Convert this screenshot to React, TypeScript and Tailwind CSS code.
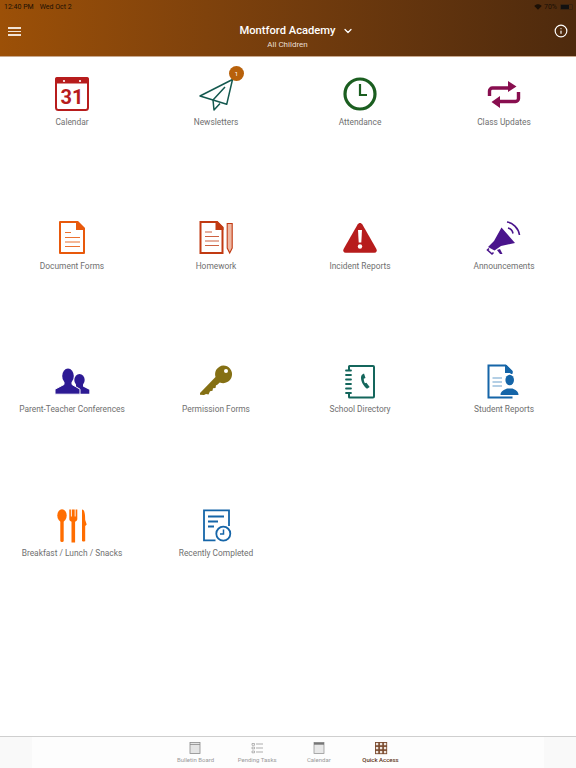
import type { ReactNode } from "react";
import { ChevronDown, Info } from "lucide-react";

const RED = "#b71c1c";

function Icon({ children }: { children: ReactNode }) {
  return (
    <svg viewBox="0 0 40 40" className="h-10 w-10">
      {children}
    </svg>
  );
}

function CalendarIcon() {
  return (
    <Icon>
      <rect x="4" y="4" width="32" height="32" rx="2.500" fill="none" stroke={RED} strokeWidth="2" />
      <path d="M5 3h30a2 2 0 0 1 2 2v4.500H3V5a2 2 0 0 1 2-2z" fill={RED} />
      <circle cx="12" cy="7" r="1.100" fill="#fff" />
      <circle cx="28" cy="7" r="1.100" fill="#fff" />
      <text x="20" y="30" textAnchor="middle" fontFamily="Roboto" fontWeight="700" fontSize="20" fill={RED}>
        31
      </text>
    </Icon>
  );
}

function PlaneIcon() {
  return (
    <Icon>
      <g fill="none" stroke="#14594f" strokeWidth="1.500" strokeLinejoin="round">
        <path d="M36.500 5.500 4 22l13 4 13.700 4.300z" />
        <path d="M29 13 17 26l1 10 6-6.500" />
      </g>
    </Icon>
  );
}

function ClockIcon() {
  return (
    <Icon>
      <circle cx="20" cy="20" r="15" fill="none" stroke="#1b5e20" strokeWidth="3.200" />
      <path d="M20 10v11h7" fill="none" stroke="#1b5e20" strokeWidth="2.200" />
    </Icon>
  );
}

function RepeatIcon() {
  return (
    <Icon>
      <g fill="none" stroke="#880e4f" strokeWidth="3.400">
        <path d="M5.500 22v-5a3 3 0 0 1 3-3H25" />
        <path d="M34.500 18v6.500a3 3 0 0 1-3 3H15" />
      </g>
      <path d="M24 7l8.500 5.500L24 18zM16 22l-8.500 6L16 34z" fill="#880e4f" />
    </Icon>
  );
}

function DocIcon() {
  const color = "#e8590c";
  return (
    <Icon>
      <path d="M8 4h17l7 7v24H8z" fill="none" stroke={color} strokeWidth="2" strokeLinejoin="round" />
      <path d="M24 3h2l7 7v2h-9z" fill={color} />
      <path d="M13 14.500h6M13 19.500h15M13 24h15M13 28.500h15" stroke={color} strokeWidth="1" opacity="0.850" />
    </Icon>
  );
}

function HomeworkIcon() {
  const color = "#c13a12";
  return (
    <Icon>
      <path d="M4.500 4h16l6 6v25h-22z" fill="none" stroke={color} strokeWidth="2" />
      <path d="M19.500 3h2l6 6v3h-8z" fill={color} />
      <path d="M9 14h7M9 18.500h14M9 23h14M9 27.500h14" stroke={color} strokeWidth="1" opacity="0.800" />
      <path d="M31.200 5.500h5v24.500l-2.500 5-2.500-5z" fill="#eeb8a3" stroke={color} strokeWidth="1.100" />
    </Icon>
  );
}

function WarningIcon() {
  return (
    <Icon>
      <path d="M20 5c1 0 1.800.6 2.400 1.600l14 24.400c1 1.900 0 3.700-2 3.700H5.600c-2 0-3-1.800-2-3.700l14-24.400C18.200 5.600 19 5 20 5z" fill={RED} />
      <path d="M18 12h4l-.7 12.500h-2.600z" fill="#fff" />
      <circle cx="20" cy="28.500" r="2.200" fill="#fff" />
    </Icon>
  );
}

function MegaphoneIcon() {
  const color = "#4a148c";
  return (
    <Icon>
      <path d="M17.500 9.500 31 25l-14 3-6.500 4.500-6.500-3.500 6-6z" fill={color} />
      <path d="M5 30.500 3.500 32l4.500 4 1.500-1.500" fill="none" stroke={color} strokeWidth="1.600" />
      <path d="M13 32l3 4h2.500l-2.500-5z" fill={color} />
      <path d="M24 10c2.500.6 4.500 2.800 5 5.500" fill="none" stroke={color} strokeWidth="1.600" />
      <path d="M23 4c5.500.6 11.500 6 12.500 13" fill="none" stroke={color} strokeWidth="1.600" />
    </Icon>
  );
}

function PeopleIcon() {
  const color = "#2d1a94";
  return (
    <Icon>
      <ellipse cx="27.500" cy="19" rx="5.200" ry="6" fill={color} />
      <path d="M24 23h7v2.500l6.300 3.200v4H24z" fill={color} />
      <g fill={color} stroke="#fff" strokeWidth="1">
        <path d="M12 20h8v3.500l8 4.700v5H3v-5l9-4.700z" />
      </g>
      <ellipse cx="16" cy="15" rx="5.800" ry="7.500" fill={color} />
    </Icon>
  );
}

function KeyIcon() {
  const color = "#857014";
  return (
    <Icon>
      <path d="M27.300 4.500a8.800 8.800 0 1 1-3.500 16.900L21 24l-1 .2-.5 2.800-2.500.2-.5 2.600-2.500.4-1.500 3.300-2.500-.5L8 34l-4-.2v-1.800L19.500 16a8.800 8.800 0 0 1 7.800-11.500z" fill={color} />
      <circle cx="30" cy="10" r="2" fill="#fff" />
    </Icon>
  );
}

function DirectoryIcon() {
  const color = "#14665c";
  return (
    <Icon>
      <path d="M9 9V5.500a.5.500 0 0 1 .5-.5H33a1 1 0 0 1 1 1v29.500a1 1 0 0 1-1 1H9.500a.5.500 0 0 1-.5-.5V32" fill="none" stroke={color} strokeWidth="2" />
      <path d="M6 9.500h5M6 14h5M6 18.500h5M6 23h5M6 27.500h5M6 32h5" stroke={color} strokeWidth="1.800" strokeLinecap="round" />
      <path d="M24 12.500c-2 .6-3 2.300-3 4.300 0 4 2.500 8.200 6 11l2.700-1.800-3.300-4.300-1.500.6c-.8-1.500-1.200-3-1.200-4.600l1.800-.8z" fill={color} />
    </Icon>
  );
}

function StudentIcon() {
  const color = "#1565a8";
  return (
    <Icon>
      <path d="M27.500 13V10.500l-6-6H4.500v32h23v-1" fill="none" stroke={color} strokeWidth="2" />
      <path d="M21 4h1.500l6 6v2H21z" fill={color} />
      <path d="M8.500 17h9.500M8.500 21h9.500M8.500 25h9.500" stroke="#6a9fcc" strokeWidth="1.200" />
      <ellipse cx="25.700" cy="19" rx="4.300" ry="5.300" fill={color} />
      <path d="M16.500 34c0-4 4-5.500 6.500-6.500h5.500c2.500 1 6 2.500 6 6.500z" fill={color} />
    </Icon>
  );
}

function FoodIcon() {
  const color = "#ff6d00";
  return (
    <Icon>
      <ellipse cx="10" cy="10.500" rx="4.700" ry="6.300" fill={color} />
      <rect x="8.300" y="12" width="3.400" height="25" rx="1.500" fill={color} />
      <path d="M17.300 4.500h1.600v7h.9v-7h2.900v7h.9v-7h1.700v9.500c0 1.300-1 2.200-2.200 2.700v20.800h-3.600V16.700c-1.200-.5-2.200-1.400-2.200-2.700z" fill={color} />
      <path d="M30 4.500c2.700 0 3.200 5 3.200 10.500l1.500 4.500-1.500 1.500v15c0 .6-3.200 .6-3.200 0z" fill={color} />
    </Icon>
  );
}

function CompletedIcon() {
  const color = "#1565a8";
  return (
    <Icon>
      <path d="M19.500 35.300H8V5.300h25V21" fill="none" stroke={color} strokeWidth="1.800" />
      <path d="M12 11.500h16M12 16.500h10M12 21.500h6" stroke={color} strokeWidth="1.800" />
      <circle cx="27.300" cy="28.700" r="7" fill="#fff" stroke={color} strokeWidth="1.800" />
      <path d="M27.500 24.500v4.500h-3.500" fill="none" stroke={color} strokeWidth="1.500" />
    </Icon>
  );
}

const tiles = [
  { label: "Calendar", icon: <CalendarIcon /> },
  { label: "Newsletters", icon: <PlaneIcon />, badge: 1 },
  { label: "Attendance", icon: <ClockIcon /> },
  { label: "Class Updates", icon: <RepeatIcon /> },
  { label: "Document Forms", icon: <DocIcon /> },
  { label: "Homework", icon: <HomeworkIcon /> },
  { label: "Incident Reports", icon: <WarningIcon /> },
  { label: "Announcements", icon: <MegaphoneIcon /> },
  { label: "Parent-Teacher Conferences", icon: <PeopleIcon /> },
  { label: "Permission Forms", icon: <KeyIcon /> },
  { label: "School Directory", icon: <DirectoryIcon /> },
  { label: "Student Reports", icon: <StudentIcon /> },
  { label: "Breakfast / Lunch / Snacks", icon: <FoodIcon /> },
  { label: "Recently Completed", icon: <CompletedIcon /> },
];

function Tile({ label, icon, badge }: { label: string; icon: ReactNode; badge?: number }) {
  return (
    <div className="flex flex-col items-center pt-[17px]">
      <div className="relative h-10 w-10">
        {icon}
        {badge ? (
          <span className="absolute right-[-8px] top-[-8px] flex h-[15px] w-[15px] items-center justify-center rounded-full bg-[#b8610b] text-[6px] text-white">
            {badge}
          </span>
        ) : null}
      </div>
      <span className="mt-[2px] text-[8.400px] leading-3 text-[#707070]">{label}</span>
    </div>
  );
}

function BoardTabIcon() {
  return (
    <svg viewBox="0 0 14 14" className="h-3.5 w-3.5">
      <rect x="2" y="1.500" width="10" height="11" fill="#e4e4e4" stroke="#8a8a8a" strokeWidth="0.800" />
      <path d="M2 3.500h10" stroke="#8a8a8a" strokeWidth="0.800" />
    </svg>
  );
}

function TasksTabIcon() {
  return (
    <svg viewBox="0 0 14 14" className="h-3.5 w-3.5">
      <path d="M6 3h7M6 7h7M6 11h7" stroke="#8a8a8a" strokeWidth="0.700" />
      <path d="M2 2.500h2.500v1.800H2zM2 6.100h2.500v1.800H2zM2 10h2.500v1.800H2z" fill="none" stroke="#8a8a8a" strokeWidth="0.600" />
    </svg>
  );
}

function CalendarTabIcon() {
  return (
    <svg viewBox="0 0 14 14" className="h-3.5 w-3.5">
      <rect x="2" y="1.500" width="10" height="11" fill="#e8e8e8" stroke="#8a8a8a" strokeWidth="0.700" />
      <path d="M2 1.500h10v2.200H2z" fill="#777" />
    </svg>
  );
}

function GridTabIcon() {
  const cells = [1.500, 5.500, 9.500];
  return (
    <svg viewBox="0 0 14 14" className="h-3.5 w-3.5">
      {cells.flatMap((y) =>
        cells.map((x) => (
          <rect key={`${x}-${y}`} x={x} y={y} width="3.200" height="3.200" fill="#efe6e0" stroke="#7a4a2e" strokeWidth="0.900" />
        )),
      )}
    </svg>
  );
}

const tabs = [
  { label: "Bulletin Board", icon: <BoardTabIcon /> },
  { label: "Pending Tasks", icon: <TasksTabIcon /> },
  { label: "Calendar", icon: <CalendarTabIcon /> },
  { label: "Quick Access", icon: <GridTabIcon />, active: true },
];

export default function App() {
  return (
    <div className="flex h-[768px] w-[576px] flex-col overflow-hidden bg-white font-['Roboto',sans-serif]">
      <header className="h-[57px] shrink-0 border-b border-[#c9a98e] bg-gradient-to-r from-[#9c5007] to-[#4e2a0d]">
        <div className="flex h-3 items-center justify-between pl-1 pr-[3px] pt-[2px] text-[7px] text-[#1a0f05]">
          <span className="flex gap-[6px]">
            <span>12:40 PM</span>
            <span>Wed Oct 2</span>
          </span>
          <span className="flex items-center gap-[2px]">
            <svg viewBox="0 0 10 8" className="h-[6px] w-2">
              <path d="M5 7.500 0 2.500C3-.5 7-.5 10 2.500z" fill="#1c1006" />
            </svg>
            <span>70%</span>
            <span className="ml-[1px] h-[6px] w-[13px] rounded-[1px] border border-[#3a2410] bg-gradient-to-r from-[#111] from-70% to-transparent to-70%" />
          </span>
        </div>
        <div className="flex items-start justify-between pl-2 pr-2 pt-[9px]">
          <div className="mt-[6px] flex w-[13px] flex-col gap-[2px]">
            <span className="h-[1.500px] bg-[#f1e3d6]" />
            <span className="h-[1.500px] bg-[#f1e3d6]" />
            <span className="h-[1.500px] bg-[#f1e3d6]" />
          </div>
          <div className="flex flex-col items-center text-white">
            <div className="relative text-[11.200px] font-medium leading-5">
              Montford Academy
              <ChevronDown className="absolute right-[-18px] top-[4px] h-3 w-3" strokeWidth={2.500} />
            </div>
            <span className="text-[8px] leading-2 text-[#eadfd4]">All Children</span>
          </div>
          <Info className="mt-[3px] h-[14px] w-[14px] text-white" strokeWidth={2} />
        </div>
      </header>
      <main className="grid flex-1 auto-rows-[143.700px] grid-cols-4 content-start">
        {tiles.map((tile) => (
          <Tile key={tile.label} label={tile.label} icon={tile.icon} badge={tile.badge} />
        ))}
      </main>
      <nav className="flex h-[32px] shrink-0 justify-center border-t border-[#cfcfcf] bg-[#fdfdfd]">
        <div className="mr-auto h-full w-8 bg-[#f9f9f9]" />
        {tabs.map((tab) => (
          <div key={tab.label} className="flex w-[61.700px] flex-col items-center pt-[4px]">
            {tab.icon}
            <span className={tab.active ? "mt-[1px] text-[6px] font-medium leading-2 text-[#5f3316]" : "mt-[1px] text-[6px] leading-2 text-[#9a9a9a]"}>
              {tab.label}
            </span>
          </div>
        ))}
        <div className="ml-auto h-full w-8 bg-[#f9f9f9]" />
      </nav>
    </div>
  );
}
